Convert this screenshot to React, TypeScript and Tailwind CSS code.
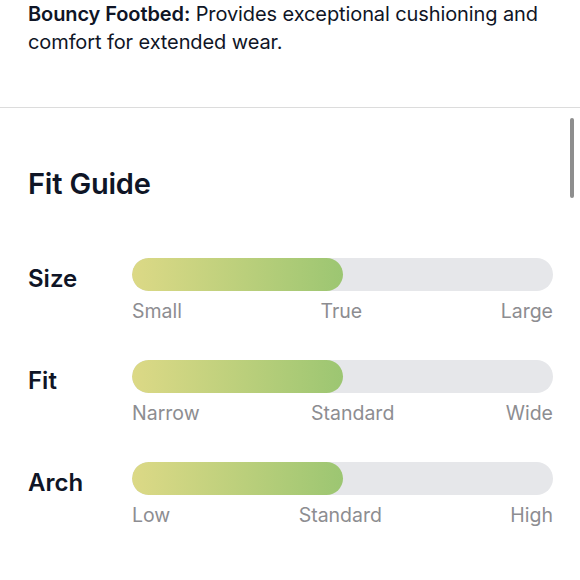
import React from "react";

const rows = [
  { name: "Size", labels: ["Small", "True", "Large"], value: 50 },
  { name: "Fit", labels: ["Narrow", "Standard", "Wide"], value: 50 },
  { name: "Arch", labels: ["Low", "Standard", "High"], value: 50 },
];

export default function App() {
  return (
    <div
      className="relative w-[580px] h-[580px] overflow-hidden bg-white text-[#0f1526]"
      style={{ fontFamily: "Inter, 'Noto Sans', sans-serif" }}
    >
      <div className="px-[28px] text-[20px] leading-[28px] tracking-[-0.1px]">
        <span className="font-semibold">Bouncy Footbed:</span> Provides exceptional cushioning and comfort for extended wear.
      </div>
      <div className="mt-[51px] h-px bg-[#dcdcdc]" />
      <div className="px-[28px] pt-[60px]">
        <h2 className="text-[29px] leading-[32px] font-semibold tracking-[-0.2px]">Fit Guide</h2>
        <div className="mt-[58px] flex flex-col gap-[37px]">
          {rows.map((r) => (
            <div key={r.name} className="grid grid-cols-[104px_1fr] items-start">
              <div className="mt-[4px] h-[33px] flex items-center text-[24px] font-semibold">{r.name}</div>
              <div className="w-[421px]">
                <div className="h-[33px] rounded-full bg-[#e6e7ea] overflow-hidden">
                  <div
                    className="h-full rounded-full bg-gradient-to-r from-[#dcd986] to-[#9cc672]"
                    style={{ width: `${r.value}%` }}
                  />
                </div>
                <div className="mt-[8px] flex justify-between text-[19.5px] leading-[24px] text-[#8d8d91]">
                  <span>{r.labels[0]}</span>
                  <span>{r.labels[1]}</span>
                  <span>{r.labels[2]}</span>
                </div>
              </div>
            </div>
          ))}
        </div>
      </div>
      <div className="absolute right-[6px] top-[118px] h-[80px] w-[4px] rounded-full bg-[#8e8e8e]" />
    </div>
  );
}
